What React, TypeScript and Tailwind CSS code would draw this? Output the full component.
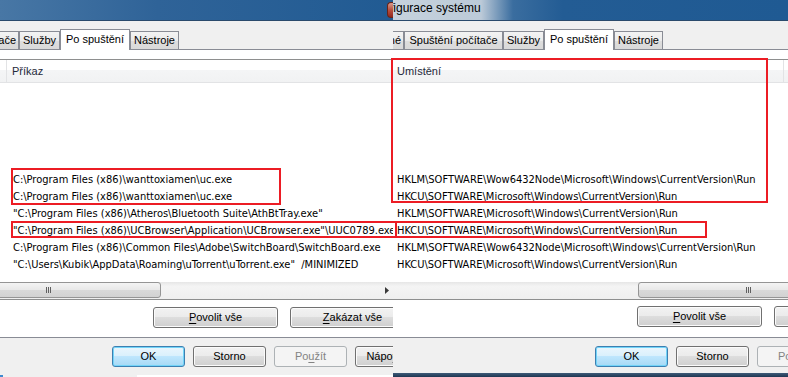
import React from 'react';

type Kind = 'normal' | 'default' | 'disabled';

const btnStyle: Record<Kind, string> = {
  normal:
    'border-[#707070] text-black bg-[linear-gradient(180deg,#f2f2f2_0%,#ebebeb_49%,#dddddd_50%,#cfcfcf_100%)] shadow-[inset_0_0_0_1px_#fbfbfb]',
  default:
    'border-[#3c7fb1] text-black bg-[linear-gradient(180deg,#eaf6fd_0%,#d9f0fc_49%,#bee6fd_50%,#a7d9f5_100%)] shadow-[inset_0_0_0_1px_#72d4f8]',
  disabled: 'border-[#adb2b5] text-[#838383] bg-[#f4f4f4]',
};

function Button({
  pre = '',
  accel = '',
  post = '',
  kind = 'normal',
  wide = false,
}: {
  pre?: string;
  accel?: string;
  post?: string;
  kind?: Kind;
  wide?: boolean;
}) {
  return (
    <div
      className={`h-[21px] shrink-0 rounded-[3px] border flex items-center justify-center text-[11px] whitespace-nowrap ${
        wide ? 'w-[125px]' : 'w-[73px]'
      } ${btnStyle[kind]}`}
    >
      {pre}
      {accel && <span className="underline underline-offset-[2px]">{accel}</span>}
      {post}
    </div>
  );
}

function Tab({ label, w, active = false, clip = false }: { label: string; w: string; active?: boolean; clip?: boolean }) {
  if (active) {
    return (
      <div
        className={`relative z-10 -mb-px h-[21px] ${w} shrink-0 bg-white border border-b-0 border-[#898c95] flex items-center justify-center pb-[1px] text-[11px] whitespace-nowrap`}
      >
        {label}
      </div>
    );
  }
  return (
    <div
      className={`h-[18px] ${w} shrink-0 overflow-hidden border border-b-0 border-[#898c95] bg-[linear-gradient(180deg,#f3f3f3_0%,#ebebeb_50%,#dedede_51%,#d9d9d9_100%)] flex items-center text-[11px] whitespace-nowrap ${
        clip ? 'justify-end border-l-0 pr-[2px]' : 'justify-center'
      }`}
    >
      {label}
    </div>
  );
}

function Grip() {
  return (
    <div className="flex gap-[1px]">
      <div className="w-px h-[6px] bg-[#606060]" />
      <div className="w-px h-[6px] bg-[#606060]" />
      <div className="w-px h-[6px] bg-[#606060]" />
    </div>
  );
}

const thumb =
  'h-[16px] shrink-0 rounded-[3px] border border-[#959595] bg-[linear-gradient(180deg,#f4f4f4_0%,#e8e8e8_50%,#d9d9d9_51%,#d2d2d2_100%)] flex items-center justify-center';

const leftRows = [
  'C:\\Program Files (x86)\\wanttoxiamen\\uc.exe',
  'C:\\Program Files (x86)\\wanttoxiamen\\uc.exe',
  '"C:\\Program Files (x86)\\Atheros\\Bluetooth Suite\\AthBtTray.exe"',
  '"C:\\Program Files (x86)\\UCBrowser\\Application\\UCBrowser.exe"\\UUC0789.exe',
  'C:\\Program Files (x86)\\Common Files\\Adobe\\SwitchBoard\\SwitchBoard.exe',
  '"C:\\Users\\Kubik\\AppData\\Roaming\\uTorrent\\uTorrent.exe"  /MINIMIZED',
];

const rightRows = [
  'HKLM\\SOFTWARE\\Wow6432Node\\Microsoft\\Windows\\CurrentVersion\\Run',
  'HKCU\\SOFTWARE\\Microsoft\\Windows\\CurrentVersion\\Run',
  'HKLM\\SOFTWARE\\Microsoft\\Windows\\CurrentVersion\\Run',
  'HKCU\\SOFTWARE\\Microsoft\\Windows\\CurrentVersion\\Run',
  'HKLM\\SOFTWARE\\Wow6432Node\\Microsoft\\Windows\\CurrentVersion\\Run',
  'HKCU\\SOFTWARE\\Microsoft\\Windows\\CurrentVersion\\Run',
];

function Rows({ rows, pad }: { rows: string[]; pad: string }) {
  return (
    <div className={`h-[199px] pt-[88px] ${pad}`}>
      {rows.map((r, i) => (
        <div
          key={i}
          className="h-[17px] leading-[17px] text-[11px] text-black whitespace-pre font-['DejaVu_Sans_Condensed','Liberation_Sans',sans-serif]"
        >
          {r}
        </div>
      ))}
    </div>
  );
}

const header =
  'h-[23px] border-b border-[#e2e3e5] bg-[linear-gradient(180deg,#ffffff_0%,#ffffff_45%,#f4f5f6_46%,#f1f2f3_100%)] flex items-center text-[11px] text-[#1e2a3a]';

function LeftWindow() {
  return (
    <div className="w-[393px] shrink-0 overflow-hidden flex flex-col bg-[#f0f0f0]">
      {/* title bar, close button just peeking in */}
      <div className="h-[21px] border-b border-[#2a4a6c] bg-[linear-gradient(90deg,#4877a5_0%,#2f6398_40%,#215b93_100%)] flex justify-end">
        <div className="mt-[2px] h-[16px] w-[6px] rounded-l-[4px] border border-r-0 border-[#6b2418] bg-[linear-gradient(180deg,#d99a8c_0%,#b9503f_50%,#93281c_100%)]" />
      </div>
      <div className="h-[8px]" />

      {/* tabs */}
      <div className="h-[20px] flex items-end">
        <Tab label="Spuštění počítače" w="w-[19px]" clip />
        <Tab label="Služby" w="w-[41px]" />
        <Tab label="Po spuštění" w="w-[70px]" active />
        <Tab label="Nástroje" w="w-[49px]" />
      </div>

      {/* tab page */}
      <div className="border-y border-[#898c95] bg-white">
        <div className="h-[9px]" />
        <div className="border-y border-[#8e8f8f]">
          <div className={header}>
            <div className="w-[7px] h-full border-r border-[#e2e3e5]" />
            <span className="pl-[5px]">Příkaz</span>
          </div>
          <Rows rows={leftRows} pad="pl-[13px]" />
          <div className="h-[17px] bg-[linear-gradient(180deg,#e6e6e6_0%,#f4f4f4_25%,#efefef_100%)] flex items-start">
            <div className={`${thumb} -ml-[64px] w-[225px]`}>
              <Grip />
            </div>
            <div className="flex-1" />
            <svg width="4" height="7" viewBox="0 0 4 7" className="mt-[5px] mr-[4px]">
              <path d="M0 0 L4 3.5 L0 7 Z" fill="#3a3a3a" />
            </svg>
          </div>
        </div>
        <div className="h-[37px] pt-[7px] pl-[153px] flex gap-[12px]">
          <Button accel="P" post="ovolit vše" wide />
          <Button accel="Z" post="akázat vše" wide />
        </div>
      </div>

      {/* dialog buttons */}
      <div className="h-[35px] pt-[8px] pl-[112px] flex gap-[8px]">
        <Button post="OK" kind="default" />
        <Button post="Storno" />
        <Button pre="Po" accel="u" post="žít" kind="disabled" />
        <Button pre="Nápo" accel="v" post="ěda" />
      </div>
      <div className="h-[4px] flex items-end">
        <div className="h-[2px] w-[3px] bg-[#3f8ad0]" />
        <div className="h-[2px] w-[134px]" />
        <div className="h-[2px] flex-1 bg-white" />
      </div>
    </div>
  );
}

function RightWindow() {
  return (
    <div className="flex-1 overflow-hidden flex flex-col bg-[#f0f0f0]">
      {/* title bar */}
      <div className="h-[21px] border-b border-[#2a4a6c] bg-[linear-gradient(90deg,#c6d2dd_0px,#bccad8_88px,#3a6d9f_120px,#235c94_170px,#1f5a93_100%)] overflow-hidden">
        <div className="-ml-[3px] pt-[1px] text-[12px] leading-[14px] text-black whitespace-nowrap">
          figurace systému
        </div>
      </div>
      <div className="h-[8px]" />

      {/* tabs */}
      <div className="h-[20px] flex items-end">
        <Tab label="Obecné" w="w-[11px]" clip />
        <Tab label="Spuštění počítače" w="w-[99px]" />
        <Tab label="Služby" w="w-[41px]" />
        <Tab label="Po spuštění" w="w-[70px]" active />
        <Tab label="Nástroje" w="w-[49px]" />
      </div>

      {/* tab page */}
      <div className="border-y border-[#898c95] bg-white">
        <div className="h-[9px]" />
        <div className="border-y border-[#8e8f8f]">
          <div className={header}>
            <span className="pl-[4px] w-[391px] shrink-0 h-full flex items-center border-r border-[#e2e3e5]">
              Umístění
            </span>
          </div>
          <Rows rows={rightRows} pad="pl-[4px]" />
          <div className="h-[17px] bg-[linear-gradient(180deg,#e6e6e6_0%,#f4f4f4_25%,#efefef_100%)] flex items-start">
            <div className={`${thumb} ml-[245px] w-[220px]`}>
              <Grip />
            </div>
          </div>
        </div>
        <div className="h-[37px] pt-[6px] pl-[244px] flex gap-[12px]">
          <Button accel="P" post="ovolit vše" wide />
          <Button accel="Z" post="akázat vše" wide />
        </div>
      </div>

      {/* dialog buttons */}
      <div className="h-[35px] pt-[8px] pl-[202px] flex gap-[8px]">
        <Button post="OK" kind="default" />
        <Button post="Storno" />
        <Button pre="Po" accel="u" post="žít" kind="disabled" />
      </div>
      <div className="h-[4px] bg-[linear-gradient(180deg,#3e5a78_0%,#1e3652_100%)]" />
    </div>
  );
}

export default function App() {
  return (
    <div className="relative w-[788px] h-[377px] overflow-hidden flex font-['Liberation_Sans',Arial,sans-serif]">
      <LeftWindow />
      <RightWindow />

      {/* red annotation boxes */}
      <div className="absolute left-[11px] top-[168px] w-[270px] h-[37px] border-2 border-[#ec1c24]" />
      <div className="absolute left-[11px] top-[221px] w-[386px] h-[17px] border-2 border-[#ec1c24]" />
      <div className="absolute left-[391px] top-[58px] w-[377px] h-[145px] border-2 border-[#ec1c24]" />
      <div className="absolute left-[395px] top-[221px] w-[312px] h-[17px] border-2 border-[#ec1c24]" />
    </div>
  );
}
